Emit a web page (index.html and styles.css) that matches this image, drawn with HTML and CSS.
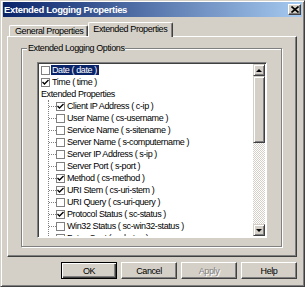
FILE: index.html
```html
<!DOCTYPE html>
<html lang="en">
<head>
  <meta charset="UTF-8" />
  <title>Extended Logging Properties</title>
  <link rel="stylesheet" href="styles.css">
</head>
<body>

  <div class="window">
    <div class="titlebar">
      <span class="title">Extended Logging Properties</span>
      <span class="close">
        <svg width="8" height="7" viewBox="0 0 8 7"><path d="M0.5 0.5 L7.5 6.5 M7.5 0.5 L0.5 6.5" stroke="#000" stroke-width="1.6"/></svg>
      </span>
    </div>

    <div class="tabs">
      <div class="tab">General Properties</div>
      <div class="tab active">Extended Properties</div>
    </div>

    <div class="panel">
      <div class="group">
        <span class="group-label">Extended Logging Options</span>
        <div class="listbox">
          <div class="items">
            <div class="row"><span class="check"></span><span class="label selected">Date ( date )</span></div>
            <div class="row"><span class="check on"><svg width="7" height="7" viewBox="0 0 7 7"><path d="M0.5 3 L2.5 5 L6.5 1" fill="none" stroke="#000" stroke-width="1.4"/></svg></span><span class="label">Time ( time )</span></div>
            <div class="row heading">Extended Properties</div>
            <div class="children">
              <div class="row"><span class="branch"></span><span class="check on"><svg width="7" height="7" viewBox="0 0 7 7"><path d="M0.5 3 L2.5 5 L6.5 1" fill="none" stroke="#000" stroke-width="1.4"/></svg></span><span class="label">Client IP Address ( c-ip )</span></div>
              <div class="row"><span class="branch"></span><span class="check"></span><span class="label">User Name ( cs-username )</span></div>
              <div class="row"><span class="branch"></span><span class="check"></span><span class="label">Service Name ( s-sitename )</span></div>
              <div class="row"><span class="branch"></span><span class="check"></span><span class="label">Server Name ( s-computername )</span></div>
              <div class="row"><span class="branch"></span><span class="check"></span><span class="label">Server IP Address ( s-ip )</span></div>
              <div class="row"><span class="branch"></span><span class="check"></span><span class="label">Server Port ( s-port )</span></div>
              <div class="row"><span class="branch"></span><span class="check on"><svg width="7" height="7" viewBox="0 0 7 7"><path d="M0.5 3 L2.5 5 L6.5 1" fill="none" stroke="#000" stroke-width="1.4"/></svg></span><span class="label">Method ( cs-method )</span></div>
              <div class="row"><span class="branch"></span><span class="check on"><svg width="7" height="7" viewBox="0 0 7 7"><path d="M0.5 3 L2.5 5 L6.5 1" fill="none" stroke="#000" stroke-width="1.4"/></svg></span><span class="label">URI Stem ( cs-uri-stem )</span></div>
              <div class="row"><span class="branch"></span><span class="check"></span><span class="label">URI Query ( cs-uri-query )</span></div>
              <div class="row"><span class="branch"></span><span class="check on"><svg width="7" height="7" viewBox="0 0 7 7"><path d="M0.5 3 L2.5 5 L6.5 1" fill="none" stroke="#000" stroke-width="1.4"/></svg></span><span class="label">Protocol Status ( sc-status )</span></div>
              <div class="row"><span class="branch"></span><span class="check"></span><span class="label">Win32 Status ( sc-win32-status )</span></div>
              <div class="row"><span class="branch"></span><span class="check"></span><span class="label">Bytes Sent ( sc-bytes )</span></div>
            </div>
          </div>
          <div class="scrollbar">
            <div class="sb-btn"><span class="arrow-up"></span></div>
            <div class="sb-thumb"></div>
            <div class="sb-track"></div>
            <div class="sb-btn"><span class="arrow-down"></span></div>
          </div>
        </div>
      </div>
    </div>

    <div class="buttons">
      <button class="btn default">OK</button>
      <button class="btn">Cancel</button>
      <button class="btn" disabled>Apply</button>
      <button class="btn">Help</button>
    </div>
  </div>

</body>
</html>
```

FILE: styles.css
```css
* {
  box-sizing: border-box;
}

body {
  margin: 0;
  font-family: "Liberation Sans", Arial, sans-serif;
  font-size: 9px;
  letter-spacing: -0.4px;
  color: #000;
}

.window {
  width: 305px;
  height: 287px;
  background: #d4d0c8;
  border: 1px solid;
  border-color: #d4d0c8 #404040 #404040 #d4d0c8;
  box-shadow: inset 1px 1px #fff, inset -1px -1px #808080;
  padding: 1px 2px;
}

.titlebar {
  height: 15px;
  display: flex;
  align-items: center;
  justify-content: space-between;
  padding: 0 1px 0 1px;
  background: linear-gradient(to right, #0a246a, #a6caf0);
}

.title {
  color: #fff;
  font-weight: bold;
  font-size: 9.5px;
  letter-spacing: -0.35px;
}

.close {
  width: 13px;
  height: 11px;
  background: #d4d0c8;
  border: 1px solid;
  border-color: #fff #404040 #404040 #fff;
  box-shadow: inset -1px -1px #808080;
  display: flex;
  align-items: center;
  justify-content: center;
}

.tabs {
  display: flex;
  align-items: flex-end;
  height: 14px;
  margin: 5px 0 0 6px;
}

.tab {
  height: 11px;
  line-height: 10px;
  padding: 0 4px 0 5px;
  border: 1px solid;
  border-bottom: none;
  border-color: #fff #404040 #fff #fff;
  box-shadow: inset -1px 0 #808080;
  border-radius: 2px 2px 0 0;
  white-space: nowrap;
}

.tab.active {
  height: 15px;
  line-height: 13px;
  margin-bottom: -1px;
  padding: 0 5px 0 4px;
  position: relative;
  z-index: 1;
  background: #d4d0c8;
}

.panel {
  height: 221px;
  margin: 0 5px 0 4px;
  border: 1px solid;
  border-color: #fff #404040 #404040 #fff;
  box-shadow: inset -1px -1px #808080;
  padding: 11px 14px 9px 13px;
}

.group {
  position: relative;
  height: 199px;
  border: 1px solid #808080;
  box-shadow: inset 1px 1px #fff, 1px 1px #fff;
  padding: 13px 14px 8px 15px;
}

.group-label {
  position: absolute;
  top: -6px;
  left: 5px;
  padding: 0 1px;
  line-height: 10px;
  background: #d4d0c8;
}

.listbox {
  display: flex;
  height: 176px;
  background: #fff;
  border: 1px solid;
  border-color: #808080 #fff #fff #808080;
  box-shadow: inset 1px 1px #404040;
  padding: 1px;
}

.items {
  flex: 1;
  overflow: hidden;
}

.row {
  display: flex;
  align-items: center;
  height: 12px;
  padding-left: 2px;
  white-space: nowrap;
}

.heading {
  line-height: 12px;
}

.check {
  flex: none;
  width: 9px;
  height: 9px;
  margin-right: 1px;
  border: 1px solid #808080;
  background: #fff;
  display: flex;
  align-items: center;
  justify-content: center;
}

.label {
  padding: 0 2px 0 1px;
  line-height: 10px;
}

.selected {
  background: #0a246a;
  color: #fff;
}

.children {
  margin-left: 9px;
  border-left: 1px dotted #808080;
}

.children .row {
  padding-left: 0;
}

.branch {
  flex: none;
  width: 7px;
  border-top: 1px dotted #808080;
}

.scrollbar {
  flex: none;
  width: 12px;
  display: flex;
  flex-direction: column;
}

.sb-btn,
.sb-thumb {
  flex: none;
  background: #d4d0c8;
  border: 1px solid;
  border-color: #d4d0c8 #404040 #404040 #d4d0c8;
  box-shadow: inset 1px 1px #fff, inset -1px -1px #808080;
}

.sb-btn {
  height: 12px;
  display: flex;
  align-items: center;
  justify-content: center;
}

.sb-thumb {
  height: 67px;
}

.sb-track {
  flex: 1;
  background: repeating-conic-gradient(#fff 0 25%, #d4d0c8 0 50%) 0 0 / 2px 2px;
}

.arrow-up,
.arrow-down {
  width: 0;
  height: 0;
  border-left: 3px solid transparent;
  border-right: 3px solid transparent;
}

.arrow-up {
  border-bottom: 3px solid #000;
}

.arrow-down {
  border-top: 3px solid #000;
}

.buttons {
  display: flex;
  justify-content: flex-end;
  gap: 4px;
  margin: 5px 5px 0 0;
}

.btn {
  width: 56px;
  height: 17px;
  padding: 0;
  font: inherit;
  letter-spacing: inherit;
  color: #000;
  background: #d4d0c8;
  border: 1px solid;
  border-color: #fff #404040 #404040 #fff;
  box-shadow: inset -1px -1px #808080;
}

.btn.default {
  border-color: #000;
  box-shadow: inset 1px 1px #fff, inset -1px -1px #404040, inset -2px -2px #808080;
}

.btn:disabled {
  color: #808080;
  text-shadow: 1px 1px #fff;
}
```
